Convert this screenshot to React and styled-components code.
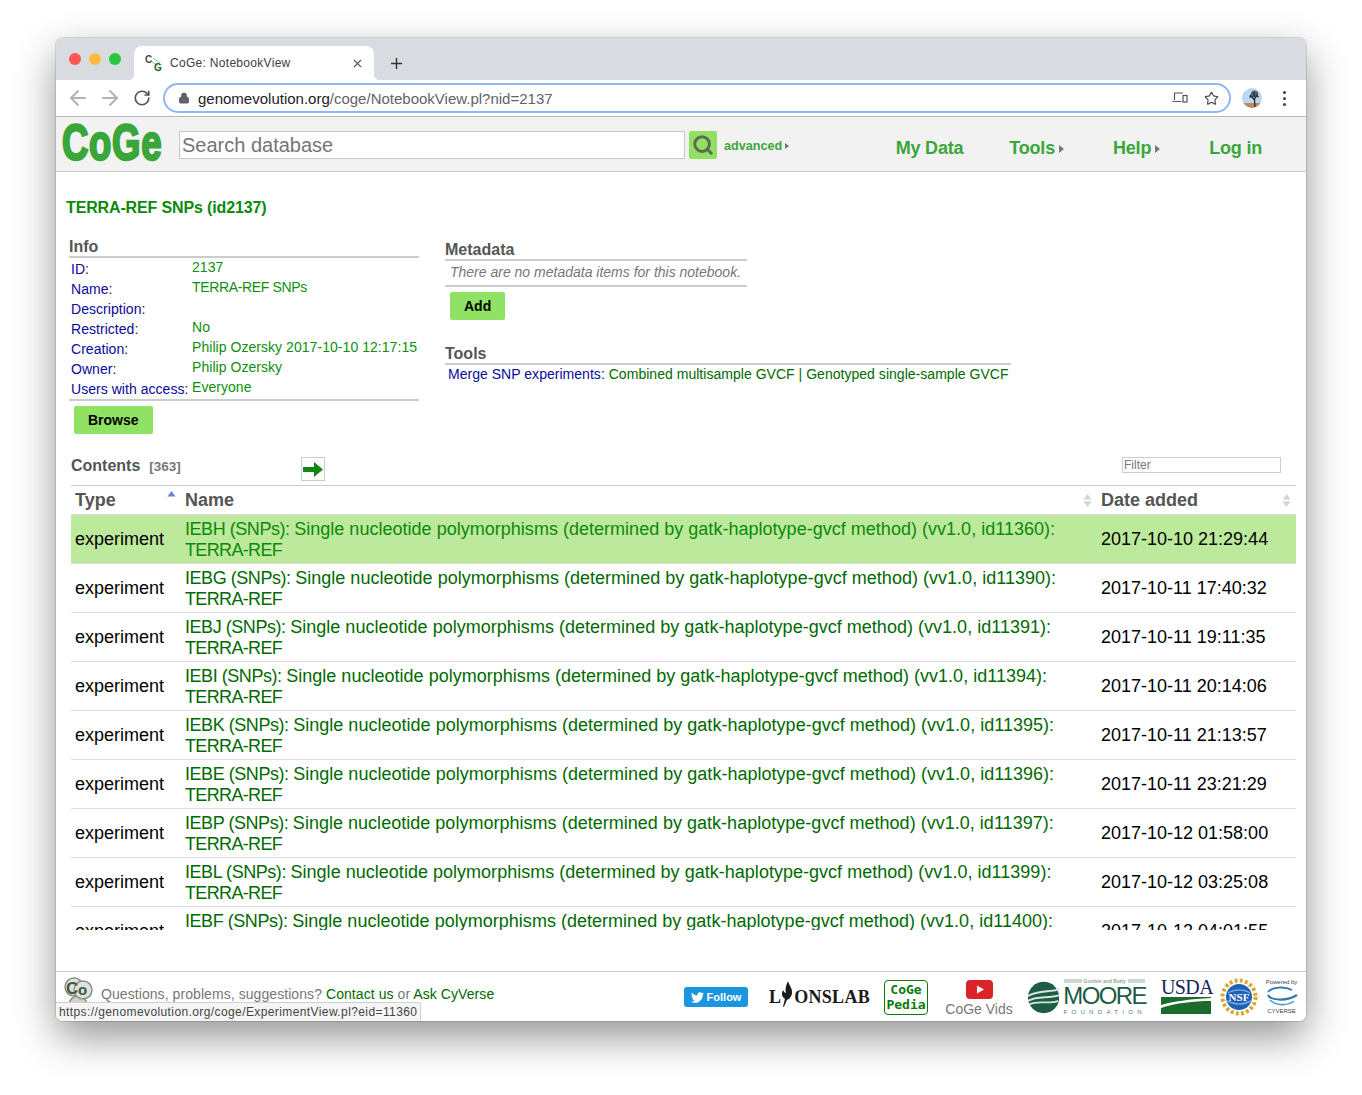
import React from 'react';
import styled, { createGlobalStyle } from 'styled-components';
import { ArrowLeft, ArrowRight, RotateCw, Lock, Star, X, Plus, Search } from 'lucide-react';
import { FaTwitter } from 'react-icons/fa';

const GlobalStyle = createGlobalStyle`
  html, body {
    margin: 0;
    padding: 0;
    background: #fff;
    font-family: "Liberation Sans", Arial, sans-serif;
  }
`;

const rows = [
  ['IEBH', '11360', '2017-10-10 21:29:44'],
  ['IEBG', '11390', '2017-10-11 17:40:32'],
  ['IEBJ', '11391', '2017-10-11 19:11:35'],
  ['IEBI', '11394', '2017-10-11 20:14:06'],
  ['IEBK', '11395', '2017-10-11 21:13:57'],
  ['IEBE', '11396', '2017-10-11 23:21:29'],
  ['IEBP', '11397', '2017-10-12 01:58:00'],
  ['IEBL', '11399', '2017-10-12 03:25:08'],
  ['IEBF', '11400', '2017-10-12 04:01:55'],
];

const info = [
  ['ID', '2137'],
  ['Name', 'TERRA-REF SNPs'],
  ['Description', ''],
  ['Restricted', 'No'],
  ['Creation', 'Philip Ozersky 2017-10-10 12:17:15'],
  ['Owner', 'Philip Ozersky'],
  ['Users with access', 'Everyone'],
];

const SortArrows = ({ up }) => (
  <svg width="9" height="15" viewBox="0 0 9 15">
    <path d="M4.5 1 L8.5 6.5 H0.5 Z" fill={up ? '#6a7fd8' : '#d4d4d4'} />
    {!up && <path d="M4.5 14 L8.5 8.5 H0.5 Z" fill="#d4d4d4" />}
  </svg>
);

const App = () => (
  <Page>
    <GlobalStyle />
    <Win>
      <TabStrip>
        <Lights>
          <Light $c="#fc5753" />
          <Light $c="#fdbc40" />
          <Light $c="#27c83f" />
        </Lights>
        <Tab>
          <svg width="18" height="18" viewBox="0 0 18 18">
            <path d="M6 7 L13 12 M8 4 L15 9" stroke="#8fc58f" strokeWidth="1" fill="none" />
            <text x="0" y="9" fontFamily="Liberation Sans" fontSize="10" fontWeight="700" fill="#445">C</text>
            <text x="9" y="17" fontFamily="Liberation Sans" fontSize="10" fontWeight="700" fill="#2b5a2b">G</text>
          </svg>
          <TabTitle>CoGe: NotebookView</TabTitle>
          <X size={13} color="#555" strokeWidth={2} />
        </Tab>
        <NewTab><Plus size={17} color="#333" strokeWidth={2} /></NewTab>
      </TabStrip>

      <Toolbar>
        <ArrowLeft size={24} color="#b1b3b6" strokeWidth={2} />
        <ArrowRight size={24} color="#b1b3b6" strokeWidth={2} />
        <Reload size={18} color="#555" strokeWidth={2.2} />
        <UrlBar>
          <Lock size={12} color="#5f6368" fill="#5f6368" strokeWidth={2} />
          <UrlText>genomevolution.org<UrlPath>/coge/NotebookView.pl?nid=2137</UrlPath></UrlText>
          <svg width="16" height="12" viewBox="0 0 16 12" fill="none" stroke="#555" strokeWidth="1.2">
            <path d="M2.5 8 V1 H11" />
            <path d="M0.5 9.5 H9.5" />
            <rect x="11" y="3.5" width="4" height="6.5" />
          </svg>
          <Star size={15} color="#444" strokeWidth={1.8} />
        </UrlBar>
        <Avatar>
          <svg width="20" height="20" viewBox="0 0 20 20">
            <path d="M13 19 L12.4 10 M12.6 12 L8 7 M12.6 11 L16 6 M12.5 9 L12 4 M10 9 L7 9 M15 8.5 L17 9" stroke="#222" strokeWidth="1.2" fill="none" />
            <circle cx="12.5" cy="6" r="3.6" fill="#333" opacity="0.75" />
          </svg>
        </Avatar>
        <Dots><i /><i /><i /></Dots>
      </Toolbar>

      <Header>
        <Logo>CoGe</Logo>
        <SearchInput placeholder="Search database" readOnly />
        <SearchButton><Search size={22} color="#5d6b55" strokeWidth={3.2} /></SearchButton>
        <Advanced>advanced<Tri $s={3} /></Advanced>
        <Nav>
          <MyData>My Data</MyData>
          <NavItem>Tools<Tri $s={4} /></NavItem>
          <NavItem>Help<Tri $s={4} /></NavItem>
          <NavItem>Log in</NavItem>
        </Nav>
      </Header>

      <Main>
        <Title>TERRA-REF SNPs (id2137)</Title>
        <Panels>
          <InfoPanel>
            <SectionHead>Info</SectionHead>
            <InfoGrid>
              {info.map(([k, v]) => (
                <React.Fragment key={k}>
                  <InfoLabel>{k}<Colon>:</Colon></InfoLabel>
                  <InfoValue $tight={k === 'Name'}>{v}</InfoValue>
                </React.Fragment>
              ))}
            </InfoGrid>
            <GreenButton $ml={5}>Browse</GreenButton>
          </InfoPanel>
          <SidePanel>
            <MetaBlock>
              <SectionHead>Metadata</SectionHead>
              <Note>There are no metadata items for this notebook.</Note>
              <GreenButton $ml={5}>Add</GreenButton>
            </MetaBlock>
            <ToolsBlock>
              <SectionHead>Tools</SectionHead>
              <ToolLine>
                <ToolLabel>Merge SNP experiments:</ToolLabel> Combined multisample GVCF | Genotyped single-sample GVCF
              </ToolLine>
            </ToolsBlock>
          </SidePanel>
        </Panels>

        <ContentsBar>
          <ContentsTitle>Contents</ContentsTitle>
          <ContentsCount>[363]</ContentsCount>
          <ArrowBox>
            <svg width="20" height="15" viewBox="0 0 20 15">
              <path d="M0 5 H11 V0 L20 7.5 L11 15 V10 H0 Z" fill="#118811" />
            </svg>
          </ArrowBox>
          <Filter placeholder="Filter" readOnly />
        </ContentsBar>

        <HeadRow>
          <TypeHead>Type<SortArrows up /></TypeHead>
          <NameHead>Name<SortArrows /></NameHead>
          <DateHead>Date added<SortArrows /></DateHead>
        </HeadRow>
        <TableBody>
          {rows.map(([code, id, date], i) => (
            <Row key={id} $active={i === 0}>
              <TypeCell>experiment</TypeCell>
              <NameCell $active={i === 0}>
                <Caps $w="-0.45px">{code} (SNPs): </Caps>Single nucleotide polymorphisms (determined by gatk-haplotype-gvcf method) (vv1.0, id{id}):<br /><Caps $w="-0.65px">TERRA-REF</Caps>
              </NameCell>
              <DateCell>{date}</DateCell>
            </Row>
          ))}
        </TableBody>
      </Main>

      <Footer>
        <CoBadge>
          <svg width="30" height="36" viewBox="0 0 30 36">
            <circle cx="14" cy="28" r="9" fill="#cfd3cc" stroke="#8a9186" strokeWidth="1.5" />
            <circle cx="10" cy="10" r="9" fill="#dfe2dc" stroke="#8a9186" strokeWidth="1.5" />
            <circle cx="19" cy="13" r="9" fill="#dfe2dc" stroke="#8a9186" strokeWidth="1.5" />
            <text x="2" y="17" fontFamily="Liberation Sans" fontSize="17" fontWeight="700" fill="#3d5a3d">C</text>
            <text x="14" y="18" fontFamily="Liberation Sans" fontSize="15" fontWeight="700" fill="#3d5a3d">o</text>
          </svg>
        </CoBadge>
        <Question>
          Questions, problems, suggestions? <FooterLink>Contact us</FooterLink> or <FooterLink>Ask CyVerse</FooterLink>
        </Question>
        <Partners>
          <FollowButton><FaTwitter size={13} color="#fff" />Follow</FollowButton>
          <Lyons>
            L
            <svg width="13" height="27" viewBox="0 0 13 27">
              <path d="M7 0 C9 5 12 8 11 13 C10 17 8 18 6 19 L3 26 L2 26 L4 18 C1 16 0 13 2 9 C3 11 4 12 5 12 C4 8 5 4 7 0 Z" fill="#1b1b1b" />
            </svg>
            ONSLAB
          </Lyons>
          <Pedia>CoGe<br />Pedia</Pedia>
          <Vids>
            <svg width="27" height="19" viewBox="0 0 27 19">
              <rect width="27" height="19" rx="4" fill="#d9252a" />
              <path d="M11 5.5 L18 9.5 L11 13.5 Z" fill="#fff" />
            </svg>
            <span>CoGe Vids</span>
          </Vids>
          <Moore>
            <svg width="33" height="33" viewBox="0 0 33 33">
              <circle cx="16.5" cy="16.5" r="16.5" fill="#1d5c45" />
              <path d="M0 15 C10 9 22 11 33 8 M0 20 C10 14 22 18 33 14 M1 24 C10 19 22 24 32 20" stroke="#d9e6df" strokeWidth="2" fill="none" />
            </svg>
            <MooreText>
              <MooreTop>Gordon and Betty</MooreTop>
              <MooreName>MOORE</MooreName>
              <MooreSub>FOUNDATION</MooreSub>
            </MooreText>
          </Moore>
          <Usda>
            <UsdaText>USDA</UsdaText>
            <svg width="50" height="17" viewBox="0 0 50 17">
              <path d="M0 0 H50 V1 C30 2 15 4 0 8 Z" fill="#1a6b2c" />
              <path d="M0 17 V11 C15 6 32 4 50 4 V17 Z" fill="#1a6b2c" />
            </svg>
          </Usda>
          <Nsf>
            <svg width="38" height="40" viewBox="0 0 38 40">
              <circle cx="19" cy="20" r="16.5" stroke="#d6a92e" strokeWidth="4" strokeDasharray="3 2.2" fill="none" />
              <circle cx="19" cy="20" r="13" fill="#1f5fb4" />
              <path d="M8 16 C14 12 24 12 30 16 M7 24 C14 28 24 28 31 24" stroke="#6fa6e3" strokeWidth="1.5" fill="none" />
              <text x="19" y="24" textAnchor="middle" fontFamily="Liberation Serif" fontSize="11" fontWeight="700" fill="#fff">NSF</text>
            </svg>
          </Nsf>
          <Cyverse>
            <CyTop>Powered by</CyTop>
            <svg width="32" height="22" viewBox="0 0 32 22" fill="none">
              <path d="M26 4 C18 0 6 1 2 6" stroke="#2f77b5" strokeWidth="1.8" />
              <path d="M2 9 C4 14 20 16 31 9" stroke="#2f77b5" strokeWidth="2.2" />
              <path d="M4 14 C10 20 22 20 28 15" stroke="#5a9bcf" strokeWidth="1.6" />
            </svg>
            <CyBottom>CYVERSE</CyBottom>
          </Cyverse>
        </Partners>
        <StatusTip>https://genomevolution.org/coge/ExperimentView.pl?eid=11360</StatusTip>
      </Footer>
    </Win>
  </Page>
);

const Page = styled.div`
  width: 1362px;
  height: 1095px;
  box-sizing: border-box;
  padding: 38px 56px 74px;
  overflow: hidden;
  background: #fff;
`;

const Win = styled.div`
  position: relative;
  height: 983px;
  display: flex;
  flex-direction: column;
  background: #fff;
  border-radius: 7px;
  overflow: hidden;
  box-shadow: 0 0 0 1px rgba(0, 0, 0, 0.12), 0 16px 40px rgba(0, 0, 0, 0.42);
`;

const TabStrip = styled.div`
  height: 42px;
  flex-shrink: 0;
  display: flex;
  align-items: flex-end;
  background: #d8dbe0;
`;

const Lights = styled.div`
  display: flex;
  gap: 8px;
  align-self: flex-start;
  padding: 15px 0 0 13px;
  width: 65px;
`;

const Light = styled.span`
  width: 12px;
  height: 12px;
  border-radius: 50%;
  background: ${p => p.$c};
`;

const Tab = styled.div`
  position: relative;
  width: 240px;
  height: 34px;
  box-sizing: border-box;
  padding: 0 10px 0 11px;
  display: flex;
  align-items: center;
  background: #fff;
  border-radius: 8px 8px 0 0;

  &::before,
  &::after {
    content: '';
    position: absolute;
    bottom: 0;
    width: 6px;
    height: 6px;
  }

  &::before {
    left: -6px;
    background: radial-gradient(circle at 0 0, transparent 6px, #fff 6.5px);
  }

  &::after {
    right: -6px;
    background: radial-gradient(circle at 100% 0, transparent 6px, #fff 6.5px);
  }
`;

const TabTitle = styled.span`
  flex: 1;
  margin-left: 7px;
  font-size: 12px;
  letter-spacing: 0.3px;
  color: #3c4043;
`;

const NewTab = styled.div`
  display: flex;
  align-items: center;
  height: 34px;
  margin-left: 14px;
`;

const Toolbar = styled.div`
  height: 37px;
  flex-shrink: 0;
  box-sizing: border-box;
  padding: 0 13px 0 10px;
  display: flex;
  align-items: center;
  gap: 8px;
  background: #fff;
  border-bottom: 1px solid #b8b8b8;
`;

const Reload = styled(RotateCw)`
  margin-left: 3px;
`;

const UrlBar = styled.div`
  width: 1068px;
  height: 30px;
  margin-left: 4px;
  box-sizing: border-box;
  padding: 0 10px 0 13px;
  display: flex;
  align-items: center;
  gap: 8px;
  border: 2px solid #8fb7f5;
  border-radius: 15px;

  svg:last-child {
    margin-left: 8px;
  }
`;

const UrlText = styled.span`
  flex: 1;
  font-size: 15px;
  color: #202124;
`;

const UrlPath = styled.span`
  color: #5f6368;
`;

const Avatar = styled.div`
  width: 20px;
  height: 20px;
  margin-left: 3px;
  border-radius: 50%;
  overflow: hidden;
  background: linear-gradient(#b9d8f5 75%, #b98c5e 75%);
`;

const Dots = styled.div`
  display: flex;
  flex-direction: column;
  gap: 3px;
  margin-left: 13px;

  i {
    width: 3px;
    height: 3px;
    border-radius: 50%;
    background: #444;
  }
`;

const Header = styled.div`
  height: 55px;
  flex-shrink: 0;
  box-sizing: border-box;
  padding: 2px 44px 0 6px;
  display: flex;
  align-items: center;
  background: #f2f2f2;
  border-bottom: 1px solid #ccc;
`;

const Logo = styled.div`
  width: 100px;
  height: 54px;
  margin: -4px 17px 0 0;
  font-size: 50px;
  line-height: 54px;
  font-weight: 700;
  letter-spacing: 1px;
  color: #3aa63a;
  -webkit-text-stroke: 2.4px #3aa63a;
  transform: scaleX(0.73);
  transform-origin: left center;
  white-space: nowrap;
`;

const SearchInput = styled.input`
  width: 506px;
  height: 28px;
  box-sizing: border-box;
  padding: 0 2px;
  border: 1px solid #c8c8c8;
  background: #fff;
  font-family: "Liberation Sans", Arial, sans-serif;
  font-size: 20px;
  outline: none;

  &::placeholder {
    color: #757575;
    opacity: 1;
  }
`;

const SearchButton = styled.div`
  width: 28px;
  height: 28px;
  margin-left: 4px;
  display: flex;
  align-items: center;
  justify-content: center;
  background: #8fe063;
  border-radius: 2px;
`;

const Advanced = styled.div`
  margin: 1px 0 0 7px;
  font-size: 12.6px;
  font-weight: 700;
  color: #3aa63a;
  display: flex;
  align-items: center;
  gap: 3px;
`;

const Tri = styled.span`
  width: 0;
  height: 0;
  border-left: ${p => p.$s + 1}px solid #777;
  border-top: ${p => p.$s}px solid transparent;
  border-bottom: ${p => p.$s}px solid transparent;
`;

const Nav = styled.div`
  margin-left: auto;
  padding-top: 7px;
  display: flex;
  gap: 49px;
`;

const NavItem = styled.div`
  display: flex;
  align-items: center;
  gap: 4px;
  font-size: 18px;
  font-weight: 700;
  letter-spacing: -0.2px;
  color: #3aa63a;
`;

const MyData = styled(NavItem)`
  margin-right: -3px;
`;

const Main = styled.div`
  flex: 1;
  min-height: 0;
  box-sizing: border-box;
  padding: 27px 10px 0 10px;
  display: flex;
  flex-direction: column;
`;

const Title = styled.div`
  font-size: 16px;
  font-weight: 700;
  line-height: 18px;
  letter-spacing: -0.14px;
  color: #0a8a0a;
`;

const Panels = styled.div`
  display: flex;
  margin-top: 22px;
  padding-left: 3px;
  height: 216px;
  flex-shrink: 0;
`;

const InfoPanel = styled.div`
  width: 350px;
`;

const SidePanel = styled.div`
  margin-left: 26px;
  padding-top: 3px;
  display: flex;
  flex-direction: column;
`;

const MetaBlock = styled.div`
  width: 302px;
`;

const ToolsBlock = styled.div`
  width: 566px;
  margin-top: 26px;
`;

const SectionHead = styled.div`
  font-size: 16px;
  font-weight: 700;
  line-height: 16px;
  color: #555;
  padding-bottom: 1px;
  border-bottom: 2px solid #ccc;
`;

const InfoGrid = styled.div`
  display: grid;
  grid-template-columns: 121px 1fr;
  grid-auto-rows: 20px;
  padding: 0 0 0 2px;
  border-bottom: 2px solid #ccc;
  height: 143px;
  box-sizing: border-box;
`;

const InfoLabel = styled.div`
  font-size: 14px;
  line-height: 20px;
  padding-top: 1px;
  letter-spacing: 0.04px;
  color: #0a0a9a;
  white-space: nowrap;
`;

const Colon = styled.span`
  color: #222;
`;

const InfoValue = styled.div`
  font-size: 14px;
  line-height: 18px;
  letter-spacing: ${p => p.$tight ? '-0.35px' : '0.05px'};
  color: #0d8f0d;
  white-space: nowrap;
`;

const GreenButton = styled.div`
  display: inline-block;
  margin: 5px 0 0 ${p => p.$ml}px;
  padding: 0 14px;
  height: 28px;
  line-height: 28px;
  font-size: 14px;
  font-weight: 700;
  color: #000;
  background: #90e264;
  border-radius: 2px;
`;

const Note = styled.div`
  height: 24px;
  line-height: 22px;
  padding-left: 5px;
  font-size: 14px;
  font-style: italic;
  color: #777;
  border-bottom: 2px solid #ccc;
  white-space: nowrap;
`;

const ToolLine = styled.div`
  padding: 1px 0 0 3px;
  font-size: 14px;
  line-height: 16px;
  letter-spacing: 0.03px;
  color: #006a00;
  white-space: nowrap;
`;

const ToolLabel = styled.span`
  color: #0a0a9a;
`;

const ContentsBar = styled.div`
  height: 30px;
  margin-left: 5px;
  box-sizing: border-box;
  flex-shrink: 0;
  display: flex;
  align-items: flex-start;
  padding-right: 15px;
`;

const ContentsTitle = styled.div`
  margin-top: 2px;
  font-size: 16px;
  font-weight: 700;
  line-height: 18px;
  color: #555;
`;

const ContentsCount = styled.div`
  margin: 4px 0 0 9px;
  font-size: 13.5px;
  font-weight: 700;
  line-height: 16px;
  color: #777;
`;

const ArrowBox = styled.div`
  width: 24px;
  height: 24px;
  margin: 2px 0 0 120px;
  box-sizing: border-box;
  border: 1px solid #ccc;
  display: flex;
  align-items: center;
  justify-content: center;
`;

const Filter = styled.input`
  width: 159px;
  height: 16px;
  margin: 2px 0 0 auto;
  box-sizing: border-box;
  padding: 0 1px;
  border: 1px solid #ccc;
  font-family: "Liberation Sans", Arial, sans-serif;
  font-size: 12px;
  outline: none;

  &::placeholder {
    color: #777;
    opacity: 1;
  }
`;

const HeadRow = styled.div`
  height: 30px;
  margin-left: 5px;
  flex-shrink: 0;
  box-sizing: border-box;
  border-top: 1px solid #ccc;
  border-bottom: 1px solid #ddd;
  display: grid;
  grid-template-columns: 110px 920px 1fr;
  align-items: center;
  font-size: 18px;
  font-weight: 700;
  color: #555;
`;

const HeadCell = styled.div`
  display: flex;
  align-items: center;
  justify-content: space-between;
`;

const TypeHead = styled(HeadCell)`
  padding: 0 5px 0 4px;
  svg { margin: -6px 0 0 0; }
`;

const NameHead = styled(HeadCell)`
  padding: 0 9px 0 4px;
`;

const DateHead = styled(HeadCell)`
  padding: 0 5px 0 0;
`;

const TableBody = styled.div`
  height: 415px;
  margin-left: 5px;
  flex-shrink: 0;
  overflow: hidden;
`;

const Row = styled.div`
  height: 49px;
  box-sizing: border-box;
  display: grid;
  grid-template-columns: 114px 916px 1fr;
  align-items: center;
  border-bottom: 1px solid #ddd;
  background: ${p => p.$active ? '#bde99c' : '#fff'};
  font-size: 18px;
`;

const TypeCell = styled.div`
  padding-left: 4px;
  color: #000;
`;

const NameCell = styled.div`
  margin-top: 2px;
  line-height: 21px;
  letter-spacing: 0.02px;
  color: ${p => p.$active ? '#0a8a0a' : '#006a00'};
  white-space: nowrap;
`;

const Caps = styled.span`
  letter-spacing: ${p => p.$w};
`;

const DateCell = styled.div`
  color: #000;
`;

const Footer = styled.div`
  position: relative;
  height: 50px;
  flex-shrink: 0;
  box-sizing: border-box;
  padding: 0 6px 0 8px;
  display: flex;
  background: #fff;
  border-top: 1px solid #ccc;
  overflow: hidden;
`;

const CoBadge = styled.div`
  padding-top: 5px;
  width: 37px;
  height: 40px;
`;

const Question = styled.div`
  padding-top: 14px;
  font-size: 14px;
  line-height: 17px;
  letter-spacing: 0.07px;
  color: #777;
  white-space: nowrap;
`;

const FooterLink = styled.span`
  color: #006a00;
`;

const Partners = styled.div`
  margin-left: auto;
  display: flex;
  align-items: flex-start;
`;

const FollowButton = styled.div`
  width: 64px;
  height: 20px;
  margin-top: 15px;
  display: flex;
  align-items: center;
  justify-content: center;
  gap: 3px;
  font-size: 11px;
  font-weight: 700;
  color: #fff;
  background: #1b95e0;
  border-radius: 3px;
`;

const Lyons = styled.div`
  width: 101px;
  margin: 9px 0 0 21px;
  height: 27px;
  display: flex;
  align-items: flex-end;
  font-family: "Liberation Serif", serif;
  font-size: 18px;
  font-weight: 700;
  line-height: 21px;
  letter-spacing: 0.3px;
  color: #1b1b1b;
  white-space: nowrap;
`;

const Pedia = styled.div`
  width: 44px;
  height: 35px;
  margin: 8px 0 0 14px;
  box-sizing: border-box;
  border: 1px solid #0a7a0a;
  border-radius: 4px;
  font-family: "DejaVu Sans Mono", monospace;
  font-size: 13px;
  font-weight: 700;
  line-height: 15px;
  padding-top: 1px;
  text-align: center;
  color: #0a7a0a;
`;

const Vids = styled.div`
  width: 68px;
  margin: 8px 0 0 17px;
  display: flex;
  flex-direction: column;
  align-items: center;
  gap: 3px;
  font-size: 14px;
  line-height: 15px;
  color: #777;
  white-space: nowrap;
`;

const Moore = styled.div`
  width: 118px;
  margin: 6px 0 0 15px;
  display: flex;
  align-items: center;
  gap: 4px;
`;

const MooreText = styled.div`
  display: flex;
  flex-direction: column;
  align-items: center;
  color: #1d5c45;
`;

const MooreTop = styled.div`
  display: flex;
  align-items: center;
  gap: 2px;
  width: 81px;
  font-size: 5px;
  line-height: 6px;
  font-weight: 700;
  color: #8aa898;
  white-space: nowrap;

  &::before,
  &::after {
    content: '';
    flex: 1;
    height: 4px;
    background: #c9d8d0;
  }
`;

const MooreName = styled.div`
  font-size: 24px;
  line-height: 24px;
  letter-spacing: -1.6px;
`;

const MooreSub = styled.div`
  font-size: 6px;
  line-height: 8px;
  letter-spacing: 4.3px;
  white-space: nowrap;
  color: #4f7f6c;
`;

const Usda = styled.div`
  width: 51px;
  margin: 6px 0 0 15px;
  display: flex;
  flex-direction: column;
`;

const UsdaText = styled.div`
  font-family: "Liberation Serif", serif;
  font-size: 20px;
  line-height: 19px;
  letter-spacing: -0.6px;
  color: #14215f;
`;

const Nsf = styled.div`
  margin: 5px 0 0 8px;
  width: 38px;
`;

const Cyverse = styled.div`
  width: 37px;
  margin: 6px 0 0 5px;
  display: flex;
  flex-direction: column;
  align-items: center;
`;

const CyTop = styled.div`
  font-size: 6px;
  line-height: 8px;
  color: #444;
  white-space: nowrap;
`;

const CyBottom = styled.div`
  font-size: 6px;
  line-height: 7px;
  color: #444;
  white-space: nowrap;
`;

const StatusTip = styled.div`
  position: absolute;
  left: 0;
  bottom: 0;
  height: 19px;
  box-sizing: border-box;
  padding: 0 3px;
  font-size: 12px;
  line-height: 18px;
  letter-spacing: 0.4px;
  color: #444;
  background: #f5f5f5;
  border: 1px solid #d0d0d0;
  border-left: 0;
  border-bottom: 0;
  border-radius: 0 3px 0 0;
`;

export default App;
